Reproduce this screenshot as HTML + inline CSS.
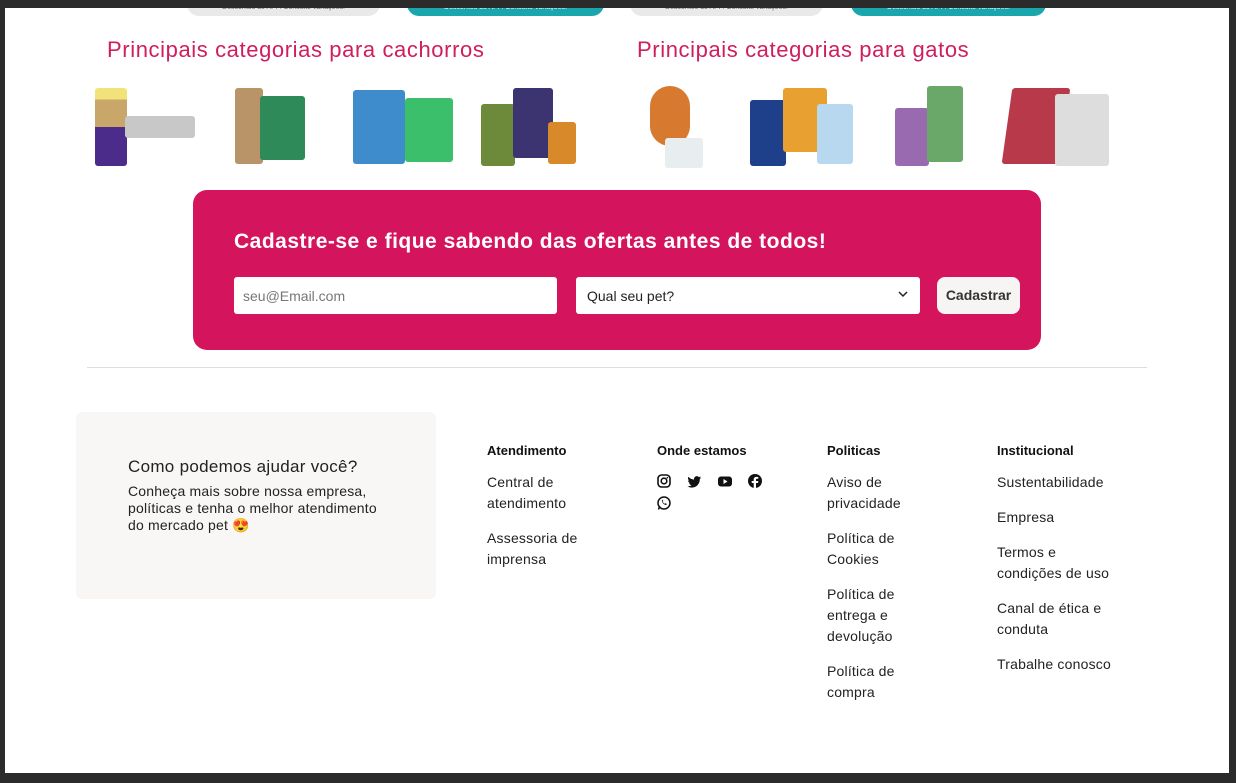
<!DOCTYPE html>
<html><head><meta charset="utf-8"><style>
*{margin:0;padding:0;box-sizing:border-box}
body{width:1236px;height:783px;background:#2b2b2b;font-family:"Liberation Sans",sans-serif;position:relative;overflow:hidden}
.page{position:absolute;left:5px;top:8px;width:1224px;height:765px;background:#fff;overflow:hidden}
.a{position:absolute}
.pill{position:absolute;top:-6px;height:14px;border-radius:0 0 12px 12px;font-size:7px;text-align:center;line-height:12px}
.g{background:#e9e9e9;color:#666}.t{background:#1aa6ad;color:#e9ffff}
h2{position:absolute;font-weight:normal;font-size:22px;letter-spacing:0.6px;color:#d01d5e;top:29px}
.img{position:absolute;border-radius:3px}
.col h4{font-size:13px;font-weight:bold;color:#111;margin-bottom:14px}
.col p{font-size:14px;color:#222;line-height:21px;margin-bottom:14px;letter-spacing:0.2px}
</style></head><body><div class="page">
<div class="pill g" style="left:182px;width:193px">Descontos do APP. Consulte variações.</div>
<div class="pill t" style="left:402px;width:197px">Descontos do APP. Consulte variações.</div>
<div class="pill g" style="left:625px;width:193px">Descontos do APP. Consulte variações.</div>
<div class="pill t" style="left:846px;width:195px">Descontos do APP. Consulte variações.</div>
<h2 style="left:102px">Principais categorias para cachorros</h2>
<h2 style="left:632px">Principais categorias para gatos</h2>
<div class="img" style="left:90px;top:80px;width:32px;height:78px;background:linear-gradient(#f2e27a 15%,#c9a76a 15% 50%,#4b2c8a 50%)"></div>
<div class="img" style="left:120px;top:108px;width:70px;height:22px;background:#c8c8c8"></div>
<div class="img" style="left:230px;top:80px;width:28px;height:76px;background:#b89468"></div>
<div class="img" style="left:255px;top:88px;width:45px;height:64px;background:#2f8a5a"></div>
<div class="img" style="left:348px;top:82px;width:52px;height:74px;background:#3e8ccc"></div>
<div class="img" style="left:400px;top:90px;width:48px;height:64px;background:#3bbf6a"></div>
<div class="img" style="left:476px;top:96px;width:34px;height:62px;background:#6d8a3a"></div>
<div class="img" style="left:508px;top:80px;width:40px;height:70px;background:#3b3470"></div>
<div class="img" style="left:543px;top:114px;width:28px;height:42px;background:#d88a2a"></div>
<div class="img" style="left:645px;top:78px;width:40px;height:60px;background:#d77a30;border-radius:20px"></div>
<div class="img" style="left:660px;top:130px;width:38px;height:30px;background:#e8eef0"></div>
<div class="img" style="left:745px;top:92px;width:36px;height:66px;background:#1e3f8a"></div>
<div class="img" style="left:778px;top:80px;width:44px;height:64px;background:#e8a030"></div>
<div class="img" style="left:812px;top:96px;width:36px;height:60px;background:#b8d8f0"></div>
<div class="img" style="left:890px;top:100px;width:34px;height:58px;background:#9a6ab0"></div>
<div class="img" style="left:922px;top:78px;width:36px;height:76px;background:#6aa86a"></div>
<div class="img" style="left:1002px;top:80px;width:58px;height:76px;background:#b83a4a;transform:skewX(-8deg)"></div>
<div class="img" style="left:1050px;top:86px;width:54px;height:72px;background:#ddd"></div>
<div class="a" style="left:188px;top:182px;width:848px;height:160px;background:#d4145c;border-radius:14px">
 <div class="a" style="left:41px;top:40px;color:#fff;font-size:21px;font-weight:bold;letter-spacing:0.5px">Cadastre-se e fique sabendo das ofertas antes de todos!</div>
 <div class="a" style="left:41px;top:87px;width:323px;height:37px;background:#fff;border-radius:3px;font-size:14px;color:#777;padding:11px 9px">seu@Email.com</div>
 <div class="a" style="left:383px;top:87px;width:344px;height:37px;background:#fff;border-radius:3px;font-size:14px;color:#222;padding:11px 11px">Qual seu pet?<svg style="position:absolute;right:12px;top:14px" width="10" height="7" viewBox="0 0 10 7"><path d="M1 1l4 4 4-4" fill="none" stroke="#222" stroke-width="1.5"/></svg></div>
 <div class="a" style="left:744px;top:87px;width:83px;height:37px;background:#f7f5f3;border-radius:8px;font-size:14px;font-weight:bold;color:#333;text-align:center;line-height:37px">Cadastrar</div>
</div>
<div class="a" style="left:82px;top:359px;width:1060px;height:1px;background:#ddd"></div>
<div class="a" style="left:71px;top:404px;width:360px;height:187px;background:#f9f7f5;border-radius:6px">
 <div class="a" style="left:52px;top:45px;font-size:17px;color:#222;letter-spacing:0.3px">Como podemos ajudar você?</div>
 <div class="a" style="left:52px;top:71px;font-size:14px;color:#222;line-height:17px;width:265px;letter-spacing:0.2px">Conheça mais sobre nossa empresa, políticas e tenha o melhor atendimento do mercado pet 😍</div>
</div>
<div class="a col" style="left:482px;top:435px;width:110px"><h4>Atendimento</h4><p>Central de atendimento</p><p>Assessoria de imprensa</p></div>
<div class="a col" style="left:652px;top:435px;width:120px"><h4>Onde estamos</h4>
<svg width="120" height="40" viewBox="0 0 120 40" fill="#111" style="margin-top:2px">
<rect x="1" y="1" width="12" height="12" rx="3.5" fill="none" stroke="#111" stroke-width="1.6"/><circle cx="7" cy="7" r="2.8" fill="none" stroke="#111" stroke-width="1.6"/><circle cx="10.3" cy="3.7" r=".8"/>
<path d="M44 3.5c-.5.2-1 .4-1.6.4.6-.3 1-.9 1.2-1.5-.5.3-1.1.6-1.7.7a2.8 2.8 0 0 0-4.8 2.5C34.800 5.500 32.800 4.400 31.400 2.800c-.8 1.300-.3 3 .9 3.800-.4 0-.9-.1-1.300-.4 0 1.400 1 2.600 2.300 2.900-.4.100-.9.100-1.300 0 .4 1.100 1.400 1.900 2.600 2-1.200.9-2.800 1.400-4.300 1.200 1.300.8 2.800 1.300 4.400 1.300 5.300 0 8.300-4.500 8.100-8.600.6-.4 1-.9 1.400-1.400z"/>
<rect x="61" y="2.5" width="14" height="10" rx="3"/><path d="M66.500 5v5l4-2.500z" fill="#fff"/>
<circle cx="98" cy="7" r="7"/><path d="M99 14V9h2l.3-2H99V5.800c0-.6.200-1 1-1h1.300V3c-.3 0-1-.1-1.800-.1-1.800 0-2.800 1-2.800 2.900V7h-2v2h2v5z" fill="#fff"/>
<circle cx="7" cy="29" r="6" fill="none" stroke="#111" stroke-width="1.5"/><path d="M1.500 35.500l1.200-3.500" stroke="#111" stroke-width="1.5"/><path d="M5 26.500c0 2 1.500 4 4 4.500l1-1-1.500-.8-.6.6c-1-.4-1.800-1.200-2.200-2.200l.6-.6-.8-1.500z"/>
</svg></div>
<div class="a col" style="left:822px;top:435px;width:100px"><h4>Politicas</h4><p>Aviso de privacidade</p><p>Política de Cookies</p><p>Política de entrega e devolução</p><p>Política de compra</p></div>
<div class="a col" style="left:992px;top:435px;width:125px"><h4>Institucional</h4><p>Sustentabilidade</p><p>Empresa</p><p>Termos e condições de uso</p><p>Canal de ética e conduta</p><p>Trabalhe conosco</p></div>
</div></body></html>
